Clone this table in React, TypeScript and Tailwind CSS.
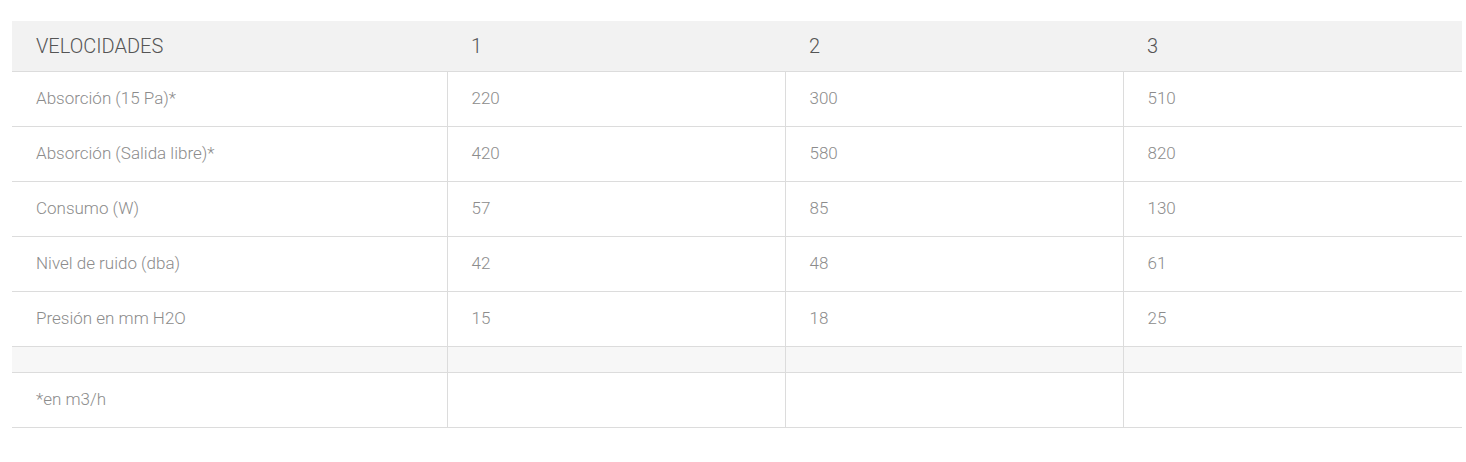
const rows = [
  ['Absorción (15 Pa)*', '220', '300', '510'],
  ['Absorción (Salida libre)*', '420', '580', '820'],
  ['Consumo (W)', '57', '85', '130'],
  ['Nivel de ruido (dba)', '42', '48', '61'],
  ['Presión en mm H2O', '15', '18', '25'],
];

const App = () => {
  return (
    <div className="w-[1466px] h-[462px] bg-white pt-[21px] pl-[12px] font-['Roboto',sans-serif]">
      <table className="w-[1450px] table-fixed border-collapse">
        <colgroup>
          <col className="w-[435px]" />
          <col className="w-[338px]" />
          <col className="w-[338px]" />
          <col className="w-[339px]" />
        </colgroup>
        <thead>
          <tr className="h-[50px] bg-[#f2f2f2] border-b border-[#dcdcdc]">
            {['VELOCIDADES', '1', '2', '3'].map((h) => (
              <th key={h} className="px-6 pt-[1px] text-left text-[20px] font-light text-[#555555]">
                {h}
              </th>
            ))}
          </tr>
        </thead>
        <tbody>
          {rows.map((r) => (
            <tr key={r[0]} className="h-[55px] border-b border-[#dcdcdc]">
              {r.map((c, i) => (
                <td
                  key={i}
                  className={`px-6 text-[17px] font-light text-[#8c8c8c] ${i > 0 ? 'border-l border-[#dcdcdc]' : ''}`}
                >
                  {c}
                </td>
              ))}
            </tr>
          ))}
          <tr className="h-[26px] bg-[#f7f7f7] border-b border-[#dcdcdc]">
            <td />
            <td className="border-l border-[#dcdcdc]" />
            <td className="border-l border-[#dcdcdc]" />
            <td className="border-l border-[#dcdcdc]" />
          </tr>
          <tr className="h-[55px] border-b border-[#dcdcdc]">
            <td className="px-6 text-[17px] font-light text-[#8c8c8c]">*en m3/h</td>
            <td className="border-l border-[#dcdcdc]" />
            <td className="border-l border-[#dcdcdc]" />
            <td className="border-l border-[#dcdcdc]" />
          </tr>
        </tbody>
      </table>
    </div>
  );
};

export default App;
